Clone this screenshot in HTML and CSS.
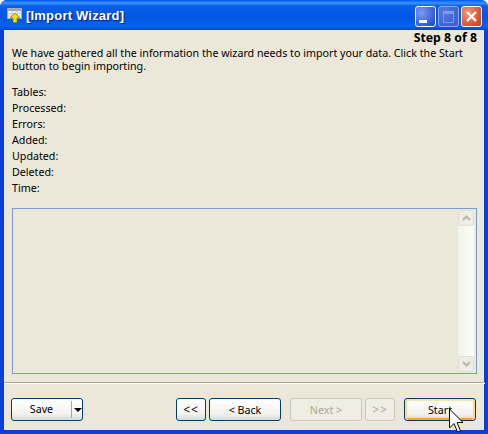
FILE: index.html
```html
<!DOCTYPE html>
<html lang="en">
<head>
    <meta charset="UTF-8">
    <title>[Import Wizard]</title>
    <link rel="stylesheet" href="styles.css">
</head>
<body>
<div class="window">
    <div class="titlebar">
        <svg class="app-icon" width="16" height="16" viewBox="0 0 16 16">
            <rect x="0.5" y="1.500" width="14" height="10" fill="#eef0f4" stroke="#a8acb8"/>
            <rect x="1" y="2" width="13" height="2" fill="#9aa4c0"/>
            <path d="M1 6.500h13M1 9h13M5 4v7M10 4v7" stroke="#c8ccd4"/>
            <path d="M8 6l5 5h-3v4.500H6V11H3z" fill="#f4dc1c" stroke="#6f8a10" stroke-width="0.8"/>
        </svg>
        <span class="title">[Import Wizard]</span>
        <div class="caption-buttons">
            <div class="cap-btn"><span class="min-glyph"></span></div>
            <div class="cap-btn cap-disabled"><span class="max-glyph"></span></div>
            <div class="cap-btn cap-close">
                <svg width="13" height="13" viewBox="0 0 13 13"><path d="M2 2l9 9M11 2l-9 9" stroke="#fff" stroke-width="2.4"/></svg>
            </div>
        </div>
    </div>
    <div class="content">
        <div class="step">Step 8 of 8</div>
        <p class="intro">We have gathered all the information the wizard needs to import your data. Click the Start button to begin importing.</p>
        <ul class="stats">
            <li>Tables:</li>
            <li>Processed:</li>
            <li>Errors:</li>
            <li>Added:</li>
            <li>Updated:</li>
            <li>Deleted:</li>
            <li>Time:</li>
        </ul>
        <div class="log">
            <div class="scrollbar">
                <div class="scroll-btn">
                    <svg width="9" height="6" viewBox="0 0 9 6"><path d="M1 5l3.500-3.500L8 5" fill="none" stroke="#b8b8a8" stroke-width="2"/></svg>
                </div>
                <div class="scroll-btn">
                    <svg width="9" height="6" viewBox="0 0 9 6"><path d="M1 1l3.500 3.500L8 1" fill="none" stroke="#b8b8a8" stroke-width="2"/></svg>
                </div>
            </div>
        </div>
        <div class="separator"></div>
        <div class="footer">
            <div class="btn save-btn">
                <span class="save-label">Save</span>
                <span class="save-arrow"></span>
            </div>
            <div class="nav">
                <div class="btn small arrows">&lt;&lt;</div>
                <div class="btn wide">&lt; Back</div>
                <div class="btn wide disabled next">Next &gt;</div>
                <div class="btn small disabled arrows">&gt;&gt;</div>
                <div class="btn wide default start">Start</div>
            </div>
        </div>
    </div>
    <svg class="cursor" width="15" height="25" viewBox="0 0 15 25">
        <path d="M1.500 1v19l4.500-4.500 3.500 8.500 3-1.200-3.500-8.300h6z" fill="#fff" stroke="#000"/>
    </svg>
</div>
</body>
</html>
```

FILE: styles.css
```css
html, body {
    margin: 0;
    padding: 0;
}
body {
    width: 488px;
    height: 434px;
    overflow: hidden;
    font-family: "Noto Sans", Tahoma, sans-serif;
    font-size: 10.7px;
    color: #000;
}
.window {
    position: relative;
    width: 488px;
    height: 434px;
    display: flex;
    flex-direction: column;
    background: #0a3fdc;
    border-radius: 7px 7px 0 0;
    overflow: hidden;
}
.titlebar {
    height: 30px;
    flex: none;
    display: flex;
    align-items: center;
    padding: 0 6px 0 7px;
    background: linear-gradient(to bottom, #0058e6 0, #3a93ff 3px, #0a5fe8 6px, #0055e5 18px, #0a62f0 26px, #0046d0 30px);
}
.app-icon {
    flex: none;
    margin-right: 3px;
}
.title {
    flex: 1;
    color: #fff;
    font-family: "Liberation Sans", Arial, sans-serif;
    font-size: 13px;
    font-weight: bold;
    letter-spacing: 0.2px;
    text-shadow: 1px 1px 1px #0f1f80;
}
.caption-buttons {
    display: flex;
    gap: 2px;
    margin-top: 3px;
}
.cap-btn {
    width: 21px;
    height: 21px;
    box-sizing: border-box;
    border: 1px solid #fff;
    border-radius: 3px;
    display: flex;
    align-items: center;
    justify-content: center;
    background: radial-gradient(circle at 30% 30%, #7d9cf0, #2f56d8 75%, #2345c0);
}
.cap-disabled {
    border-color: #8aa8f0;
    background: radial-gradient(circle at 30% 30%, #5578e0, #3d62d8 75%);
}
.cap-close {
    background: radial-gradient(circle at 30% 30%, #ec9a7c, #d8502c 70%, #c03810);
}
.min-glyph {
    width: 8px;
    height: 3px;
    background: #fff;
    align-self: flex-end;
    margin: 0 5px 3px 0;
}
.max-glyph {
    width: 9px;
    height: 8px;
    border: 1px solid #7f9bec;
    border-top-width: 3px;
}
.content {
    flex: 1;
    margin: 0 4px 4px;
    background: #ebe8d9;
    display: flex;
    flex-direction: column;
    padding: 0 7px 0 8px;
}
.step {
    text-align: right;
    font-weight: bold;
    font-size: 12.3px;
    line-height: 16px;
}
.intro {
    margin: 1px 0 0;
    line-height: 13px;
    width: 462px;
}
.stats {
    list-style: none;
    margin: 11px 0 0;
    padding: 0;
    line-height: 16px;
}
.log {
    margin-top: 12px;
    height: 164px;
    border: 1px solid #7a9ad0;
    display: flex;
    justify-content: flex-end;
    padding-right: 2px;
}
.scrollbar {
    width: 16px;
    margin: 1px 0;
    background: linear-gradient(to right, #f3f2ea, #fdfdf9);
    display: flex;
    flex-direction: column;
    justify-content: space-between;
}
.scroll-btn {
    height: 16px;
    background: #eeede5;
    border: 1px solid #e2e0d4;
    border-radius: 2px;
    box-sizing: border-box;
    display: flex;
    align-items: center;
    justify-content: center;
}
.separator {
    height: 1px;
    margin: 8px -8px 0 -8px;
    background: #a9a79c;
    border-bottom: 1px solid #fff;
}
.footer {
    margin: 14px 1px 0 -1px;
    display: flex;
    justify-content: space-between;
}
.nav {
    display: flex;
    gap: 3px;
}
.btn {
    height: 23px;
    box-sizing: border-box;
    border: 1px solid #003c74;
    border-radius: 3px;
    background: linear-gradient(to bottom, #fff, #f4f3ee 70%, #dcd8cb);
    display: flex;
    align-items: center;
    justify-content: center;
}
.small {
    width: 30px;
}
.arrows {
    letter-spacing: 1px;
    font-size: 12px;
}
.wide {
    width: 72px;
}
.disabled {
    color: #a8a696;
    border-color: #c9c7ba;
    background: #f0eee2;
}
.next {
    margin-left: 6px;
}
.start {
    margin-left: 6px;
}
.default {
    box-shadow: inset 0 2px 0 #fbe3a8, inset 2px 0 0 #fbd78c, inset -2px 0 0 #fbd78c, inset 0 -2px 0 #f0a71e;
}
.save-btn {
    width: 72px;
    justify-content: flex-start;
}
.save-label {
    width: 60px;
    text-align: center;
    border-right: 1px solid #a8a696;
    line-height: 17px;
}
.save-arrow {
    margin-left: 2px;
    border-left: 4px solid transparent;
    border-right: 4px solid transparent;
    border-top: 4px solid #000;
}
.cursor {
    position: absolute;
    left: 448px;
    top: 408px;
}
```
